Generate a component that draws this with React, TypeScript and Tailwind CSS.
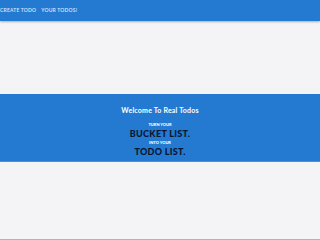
export default function App() {
  return (
    <div className="h-[240px] flex flex-col bg-[#f4f3f6] border-b border-[#b5b5b5] font-['Lato',sans-serif] overflow-hidden">
      <header className="h-[21px] shrink-0 bg-[#2479d1] shadow-[0_1px_2px_rgba(0,0,0,0.3)] flex items-center gap-[5px] text-[5px] leading-none font-semibold text-[#dce8f8] tracking-[0.2px]">
        <a className="uppercase">Create Todo</a>
        <a className="uppercase">Your Todos!</a>
      </header>
      <div className="h-[73px] shrink-0" />
      <section className="h-[68px] shrink-0 bg-[#2479d1] border-b border-[#4a90da] flex flex-col items-center pt-[13px] text-center">
        <h1 className="text-[7px] leading-none font-bold text-white tracking-[0.2px]">Welcome To Real Todos</h1>
        <p className="mt-[9px] text-[4px] leading-none font-black text-white uppercase">Turn your</p>
        <p className="mt-[2px] text-[9px] leading-none font-black text-[#0b1630] tracking-[0.3px]">BUCKET LIST.</p>
        <p className="mt-[3px] text-[4px] leading-none font-black text-white uppercase">Into your</p>
        <p className="mt-[2px] text-[9px] leading-none font-black text-[#0b1630] tracking-[0.3px]">TODO LIST.</p>
      </section>
    </div>
  );
}
